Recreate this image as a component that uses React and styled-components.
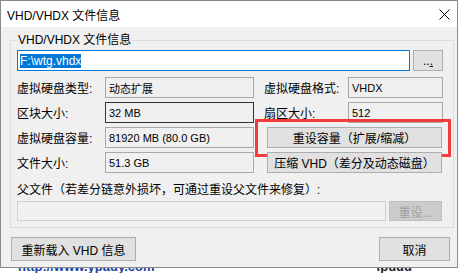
import React from 'react';
import styled, { createGlobalStyle } from 'styled-components';

const GlobalStyle = createGlobalStyle`
  body {
    margin: 0;
    background: #fff;
    font-family: "Liberation Sans", "Noto Sans CJK SC", sans-serif;
    font-size: 12px;
    color: #000;
  }
`;

const Window = styled.div`
  width: 458px;
  height: 268px;
  box-sizing: border-box;
  border: 1px solid #8a8a8a;
  display: flex;
  flex-direction: column;
  background: #f0f0f0;
`;

const TitleBar = styled.div`
  height: 26px;
  background: #fff;
  display: flex;
  align-items: center;
  justify-content: space-between;
  padding: 0 7px 0 6px;
  font-size: 12px;
`;

const Body = styled.div`
  flex: 1;
  display: flex;
  flex-direction: column;
  padding: 5px 3px 0 9px;
`;

const Group = styled.fieldset`
  margin: 0;
  padding: 0 10px 6px 6px;
  border: 1px solid #dcdcdc;
  min-width: 0;
`;

const Legend = styled.legend`
  padding: 0 1px;
  line-height: 16px;
  font-size: 12px;
`;

const PathRow = styled.div`
  display: flex;
  gap: 3px;
  height: 21px;
  margin-top: 2px;
`;

const PathInput = styled.div`
  flex: 1;
  box-sizing: border-box;
  border: 1px solid #0078d7;
  background: #fff;
  display: flex;
  align-items: center;
  padding-left: 2px;
`;

const Selected = styled.span`
  background: #0078d7;
  color: #fff;
  line-height: 14px;
  font-size: 12px;
`;

const Button = styled.div`
  box-sizing: border-box;
  background: ${(p) => (p.disabled ? '#cccccc' : '#e1e1e1')};
  border: 1px solid ${(p) => (p.disabled ? '#bfbfbf' : '#adadad')};
  color: ${(p) => (p.disabled ? '#a0a0a0' : '#000')};
  display: flex;
  align-items: center;
  justify-content: center;
  font-size: 12px;
  white-space: nowrap;
  width: ${(p) => p.w || 'auto'};
  height: ${(p) => p.h || '100%'};
`;

const InfoGrid = styled.div`
  display: grid;
  grid-template-columns: 88px 149px 94px 1fr;
  grid-auto-rows: 21px;
  row-gap: 4px;
  margin-top: 6px;
`;

const Label = styled.div`
  display: flex;
  align-items: center;
  padding-left: ${(p) => (p.right ? '10px' : '0')};
  white-space: nowrap;
`;

const Value = styled.div`
  box-sizing: border-box;
  border: 1px solid ${(p) => (p.focus ? '#333' : '#a8a8a8')};
  background: #f0f0f0;
  display: flex;
  align-items: center;
  padding-left: 3px;
  font-size: 11px;
  white-space: nowrap;
`;

const ActionCell = styled.div`
  grid-column: 3 / 5;
  position: relative;
  display: flex;
  margin: 0 1px 0 13px;
`;

const Highlight = styled.div`
  position: absolute;
  top: -8px;
  bottom: -9px;
  left: -12px;
  right: -9px;
  border: 3px solid #f03c3c;
  pointer-events: none;
`;

const ParentLabel = styled.div`
  margin-top: 10px;
  line-height: 14px;
`;

const ParentRow = styled.div`
  display: flex;
  gap: 3px;
  height: 20px;
  margin-top: 4px;
  padding-right: 1px;
`;

const ParentInput = styled.div`
  flex: 1;
  box-sizing: border-box;
  border: 1px solid #d0d0d0;
  background: #f0f0f0;
`;

const Footer = styled.div`
  display: flex;
  justify-content: space-between;
  margin-top: 9px;
  padding: 0 4px 0 1px;
  height: 24px;
`;

const Backdrop = styled.div`
  height: 5px;
  overflow: hidden;
  display: flex;
  justify-content: space-between;
  padding: 0 50px 0 18px;
  font-size: 13px;
  line-height: 12px;
`;

const Link = styled.span`
  color: #1a3fa8;
  font-weight: bold;
  margin-top: -7px;
`;

const Dark = styled.span`
  color: #222;
  font-weight: bold;
  margin-top: -7px;
`;

const CloseIcon = () => (
  <svg width="11" height="11" viewBox="0 0 11 11">
    <path d="M0.5 0.5 L10.5 10.5 M10.5 0.5 L0.5 10.5" stroke="#000" strokeWidth="1" />
  </svg>
);

export default function App() {
  return (
    <>
      <GlobalStyle />
      <Window>
        <TitleBar>
          <span>VHD/VHDX 文件信息</span>
          <CloseIcon />
        </TitleBar>
        <Body>
          <Group>
            <Legend>VHD/VHDX 文件信息</Legend>
            <PathRow>
              <PathInput>
                <Selected>F:\wtg.vhdx</Selected>
              </PathInput>
              <Button w="30px">
                ..<u>.</u>
              </Button>
            </PathRow>
            <InfoGrid>
              <Label>虚拟硬盘类型:</Label>
              <Value>动态扩展</Value>
              <Label right>虚拟硬盘格式:</Label>
              <Value>VHDX</Value>

              <Label>区块大小:</Label>
              <Value focus>32 MB</Value>
              <Label right>扇区大小:</Label>
              <Value>512</Value>

              <Label>虚拟硬盘容量:</Label>
              <Value>81920 MB (80.0 GB)</Value>
              <ActionCell>
                <Button w="100%">重设容量（扩展/缩减）</Button>
                <Highlight />
              </ActionCell>

              <Label>文件大小:</Label>
              <Value>51.3 GB</Value>
              <ActionCell>
                <Button w="100%">压缩 VHD（差分及动态磁盘）</Button>
              </ActionCell>
            </InfoGrid>
            <ParentLabel>父文件（若差分链意外损坏，可通过重设父文件来修复）:</ParentLabel>
            <ParentRow>
              <ParentInput />
              <Button w="53px" disabled>
                重设...
              </Button>
            </ParentRow>
          </Group>
          <Footer>
            <Button w="125px">重新载入 VHD 信息</Button>
            <Button w="71px">取消</Button>
          </Footer>
        </Body>
      </Window>
      <Backdrop>
        <Link>http://www.ypauy.com</Link>
        <Dark>ipuuu</Dark>
      </Backdrop>
    </>
  );
}
